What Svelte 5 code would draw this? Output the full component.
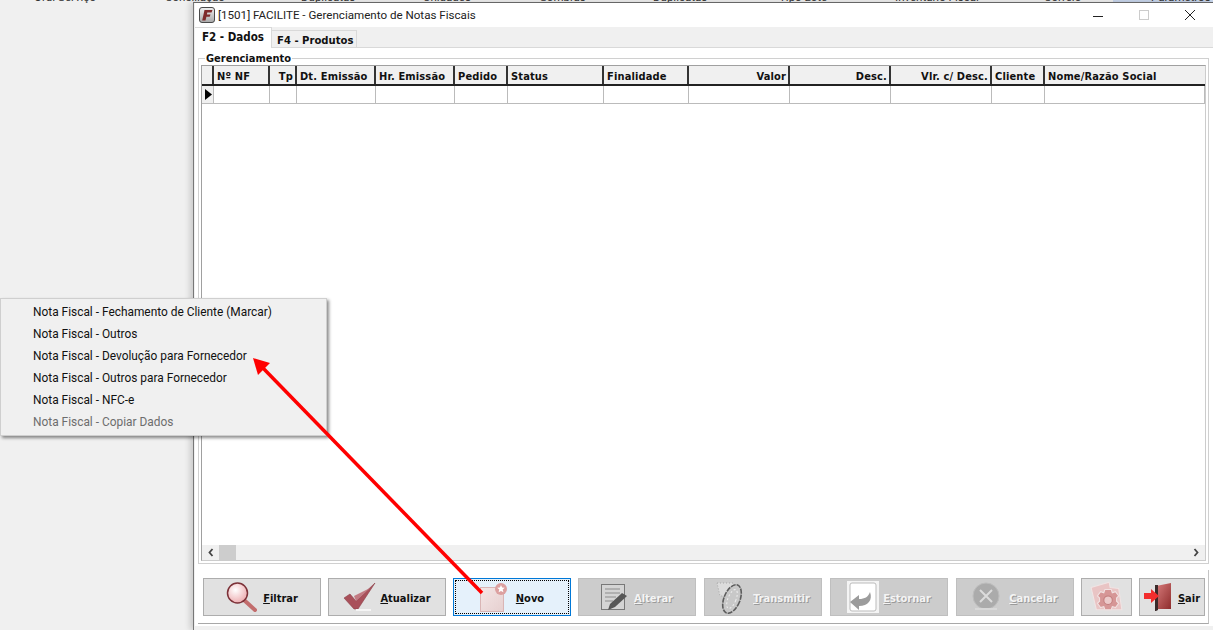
<script>
  const columns = [
    { label: "Nº NF", width: 56 },
    { label: "Tp", width: 27, right: true },
    { label: "Dt. Emissão", width: 79 },
    { label: "Hr. Emissão", width: 79 },
    { label: "Pedido", width: 53 },
    { label: "Status", width: 96 },
    { label: "Finalidade", width: 85 },
    { label: "Valor", width: 101, right: true },
    { label: "Desc.", width: 101, right: true },
    { label: "Vlr. c/ Desc.", width: 101, right: true },
    { label: "Cliente", width: 53 },
    { label: "Nome/Razão Social", width: 160 },
  ];

  // barra de menus que fica atras da janela, so aparece cortada
  const topMenu = [
    { label: "Ord. Serviço", x: 34 },
    { label: "Conciliação", x: 165 },
    { label: "Duplicatas", x: 301 },
    { label: "Unidades", x: 423 },
    { label: "Sombras", x: 540 },
    { label: "Duplicatas", x: 653 },
    { label: "Tipo Lote", x: 779 },
    { label: "Inventário Fiscal", x: 895 },
    { label: "Correio", x: 1044 },
    { label: "Parâmetros", x: 1151 },
  ];

  const menu = [
    "Nota Fiscal - Fechamento de Cliente (Marcar)",
    "Nota Fiscal - Outros",
    "Nota Fiscal - Devolução para Fornecedor",
    "Nota Fiscal - Outros para Fornecedor",
    "Nota Fiscal - NFC-e",
    "Nota Fiscal - Copiar Dados",
  ];
</script>

<div class="desktop">
  <div class="topstrip">
    <div class="active-item"></div>
    {#each topMenu as item}
      <span style="left:{item.x}px">{item.label}</span>
    {/each}
  </div>

  <div class="window">
    <div class="titlebar">
      <svg class="app-icon" width="16" height="16" viewBox="0 0 16 16">
        <defs>
          <linearGradient id="iconbg" x1="0" y1="0" x2="0" y2="1">
            <stop offset="0" stop-color="#f0f0f0" />
            <stop offset="1" stop-color="#a8a8a8" />
          </linearGradient>
        </defs>
        <rect x="0.5" y="0.5" width="15" height="15" rx="2.5" fill="url(#iconbg)" stroke="#4a4a4a" />
        <path d="M5.500 3h8l-1 2.500H8.300l-.4 2H11.500l-.8 2.300H7.400L6.500 13.500H3.200z" fill="#7f2a2a" />
      </svg>
      <span class="title">[1501] FACILITE - Gerenciamento de Notas Fiscais</span>
      <div class="winbtns">
        <svg width="46" height="24" viewBox="0 0 46 24"><path d="M18 13.500h10" stroke="#222" /></svg>
        <svg width="46" height="24" viewBox="0 0 46 24"><rect x="18.500" y="7.500" width="9" height="9" fill="none" stroke="#ccc" /></svg>
        <svg width="46" height="24" viewBox="0 0 46 24"><path d="M18 7l10 10M28 7L18 17" stroke="#222" fill="none" /></svg>
      </div>
    </div>

    <div class="body">
      <div class="tabs">
        <div class="tab active">F2 - Dados</div>
        <div class="tab">F4 - Produtos</div>
      </div>

      <div class="page">
        <fieldset class="group">
          <legend>Gerenciamento</legend>
          <div class="grid">
            <div class="gridrow head">
              <div class="indicator"></div>
              {#each columns as col}
                <div class="cell" class:right={col.right} style="width:{col.width}px">{col.label}</div>
              {/each}
            </div>
            <div class="gridrow data">
              <div class="indicator">
                <svg width="7" height="11" viewBox="0 0 7 11"><path d="M0 0l7 5.500L0 11z" fill="#000" /></svg>
              </div>
              {#each columns as col}
                <div class="cell" style="width:{col.width}px"></div>
              {/each}
            </div>
            <div class="grow"></div>
            <div class="hscroll">
              <svg class="arrow" width="17" height="15" viewBox="0 0 17 15"><path d="M10.500 4l-3 3.500 3 3.500" fill="none" stroke="#444" stroke-width="1.800" /></svg>
              <div class="thumb"></div>
              <div class="track"></div>
              <svg class="arrow" width="17" height="15" viewBox="0 0 17 15"><path d="M6.500 4l3 3.500-3 3.500" fill="none" stroke="#444" stroke-width="1.800" /></svg>
            </div>
          </div>
        </fieldset>

        <div class="actions">
          <button class="btn wide g6">
            <svg width="31" height="30" viewBox="0 0 31 30">
              <defs>
                <radialGradient id="lens" cx="0.4" cy="0.35" r="0.7">
                  <stop offset="0" stop-color="#fff" />
                  <stop offset="1" stop-color="#eca9ad" />
                </radialGradient>
              </defs>
              <path d="M18 18l11 10" stroke="#c26d6d" stroke-width="4" stroke-linecap="round" />
              <circle cx="11.500" cy="11" r="10" fill="url(#lens)" stroke="#7c3138" stroke-width="1.500" />
            </svg>
            <span><u>F</u>iltrar</span>
          </button>
          <button class="btn wide g3">
            <svg width="34" height="30" viewBox="0 0 34 30">
              <path d="M1 16l6-4 6 7L32 1 15 27h-4z" fill="#a9505a" stroke="#8c3f48" stroke-width="0.600" />
              <path d="M11 14l2 5L27 6z" fill="#c27a82" />
              <path d="M13 28h15" stroke="#f5f5f5" stroke-width="2" />
            </svg>
            <span><u>A</u>tualizar</span>
          </button>
          <button class="btn wide focused g8">
            <svg width="28" height="29" viewBox="0 0 28 29">
              <defs>
                <linearGradient id="sheet" x1="0" y1="0" x2="1" y2="1">
                  <stop offset="0" stop-color="#f4e6e6" />
                  <stop offset="1" stop-color="#e6cfcf" />
                </linearGradient>
              </defs>
              <rect x="0.500" y="4.500" width="23" height="24" fill="url(#sheet)" stroke="#d9b5b5" />
              <circle cx="21" cy="6" r="6" fill="#dca0a0" />
              <path d="M21 2l1.100 2.600 2.700.2-2.100 1.800.7 2.700-2.400-1.400-2.400 1.400.7-2.700-2.100-1.800 2.700-.2z" fill="#fff" />
            </svg>
            <span><u>N</u>ovo</span>
          </button>
          <button class="btn wide disabled g6">
            <svg width="27" height="30" viewBox="0 0 27 30">
              <rect x="0.500" y="2.500" width="23" height="25" fill="#d4d4d4" stroke="#787878" />
              <path d="M4 7h15M4 11h15M4 15h11M4 19h8" stroke="#a4a4a4" stroke-width="1.500" />
              <path d="M7 28l2-6L21 11l5 3-12 11z" fill="#565656" />
            </svg>
            <span><u>A</u>lterar</span>
          </button>
          <button class="btn wide disabled spaced g6">
            <svg width="31" height="33" viewBox="0 0 31 33">
              <path d="M1 2h16v7l-7 6H4z" fill="#dcdcdc" stroke="#a8a8a8" stroke-dasharray="1 2" />
              <ellipse cx="16" cy="18" rx="8" ry="15" transform="rotate(22 16 18)" fill="#c8c8c8" stroke="#5c5c5c" stroke-width="1.600" stroke-dasharray="5 1" />
              <ellipse cx="16" cy="18" rx="4" ry="10" transform="rotate(22 16 18)" fill="none" stroke="#eee" stroke-dasharray="2 2" />
            </svg>
            <span><u>T</u>ransmitir</span>
          </button>
          <button class="btn wide disabled spaced g4">
            <svg width="32" height="32" viewBox="0 0 32 32">
              <rect width="32" height="32" fill="#f4f4f4" />
              <rect x="3" y="2" width="26" height="28" rx="2" fill="#fff" stroke="#bbb" />
              <path d="M3 21l9-7v4c6 0 9-2 11-7 3 8-2 14-11 14v4z" fill="#9c9c9c" />
            </svg>
            <span><u>E</u>stornar</span>
          </button>
          <button class="btn wide disabled spaced g9">
            <svg width="28" height="30" viewBox="0 0 28 30">
              <circle cx="14" cy="14" r="13" fill="#ababab" stroke="#bdbdbd" />
              <path d="M8 8l12 12M20 8L8 20" stroke="#dcdcdc" stroke-width="2" />
              <path d="M3 27h22" stroke="#d8d8d8" stroke-width="2" />
            </svg>
            <span><u>C</u>ancelar</span>
          </button>
          <button class="btn small">
            <svg width="34" height="32" viewBox="0 0 32 30">
              <path d="M1 6l17-5 1 5 8 1 3 20H6z" fill="#e9c4c4" stroke="#f0e4e4" />
              <path d="M14 8h6l1 3 3-1 3 4-2 2v3l2 2-3 4-3-1-1 3h-6l-1-3-3 1-3-4 2-2v-3l-2-2 3-4 3 1z" fill="#d69696" stroke="#f1e2e2" />
              <circle cx="17" cy="18" r="4" fill="#eccaca" stroke="#c27c7c" />
            </svg>
          </button>
          <button class="btn exit g7">
            <svg width="27" height="28" viewBox="0 0 27 28">
              <defs>
                <linearGradient id="door" x1="0" y1="0" x2="1" y2="1">
                  <stop offset="0" stop-color="#d87c7c" />
                  <stop offset="1" stop-color="#8e2c2c" />
                </linearGradient>
              </defs>
              <path d="M12 3l15-3v26H12z" fill="url(#door)" />
              <path d="M11 2h3v25l-2 1h-1z" fill="#3a2a2a" />
              <path d="M0 10h7V6l8 7-8 7v-4H0z" fill="#f22d2d" />
            </svg>
            <span><u>S</u>air</span>
          </button>
        </div>
      </div>
    </div>
  </div>

  <ul class="menu">
    {#each menu as item, i}
      <li class:off={i === 5}>{item}</li>
    {/each}
  </ul>

  <svg class="pointer" width="1213" height="630" viewBox="0 0 1213 630">
    <path d="M482 593L262 367" stroke="#ff0000" stroke-width="3.500" fill="none" />
    <path d="M253 358l17 5-12 12z" fill="#ff0000" />
  </svg>
</div>

<style>
  :global(body) {
    margin: 0;
    background: #f0f0f0;
    font-family: Roboto, sans-serif;
  }
  .desktop {
    position: relative;
    width: 1213px;
    height: 630px;
    overflow: hidden;
    background: #f0f0f0;
  }
  .topstrip span {
    position: absolute;
    top: -10px;
    font: 11.5px Roboto, sans-serif;
    color: #333;
    white-space: nowrap;
  }
  .active-item {
    position: absolute;
    left: 1113px;
    top: 0;
    width: 100px;
    height: 3px;
    background: #c9d6ec;
  }
  .window {
    position: absolute;
    left: 193px;
    top: 2px;
    width: 1020px;
    height: 628px;
    box-sizing: border-box;
    background: #f0f0f0;
    border-top: 1px solid #666;
    border-left: 1px solid #777;
    box-shadow: -3px 0 6px rgba(0, 0, 0, 0.16);
    display: flex;
    flex-direction: column;
  }
  .titlebar {
    height: 24px;
    flex: none;
    background: #fff;
    display: flex;
    align-items: center;
    padding-left: 4px;
    margin-left: 1px;
  }
  .app-icon {
    margin-top: -1px;
  }
  .title {
    margin-left: 3px;
    font: 11.6px Roboto, sans-serif;
    color: #222;
    margin-top: -1px;
  }
  .winbtns {
    margin-left: auto;
    display: flex;
  }
  .body {
    flex: 1;
    display: flex;
    flex-direction: column;
    padding-left: 1px;
    min-height: 0;
  }
  .tabs {
    height: 20px;
    display: flex;
    align-items: flex-end;
    flex: none;
  }
  .tab {
    height: 17px;
    box-sizing: border-box;
    width: 85px;
    padding-left: 5px;
    font: bold 11.2px/19px "DejaVu Sans Condensed", "DejaVu Sans", sans-serif;
    border: 1px solid #d9d9d9;
    border-bottom: none;
    border-left: none;
    color: #111;
    white-space: nowrap;
  }
  .tab.active {
    height: 21px;
    width: 77px;
    font-size: 11.5px;
    line-height: 19px;
    padding-left: 7px;
    background: #fff;
    margin-bottom: -1px;
    position: relative;
  }
  .page {
    flex: 1;
    background: #fff;
    border-top: 1px solid #d9d9d9;
    display: flex;
    flex-direction: column;
    min-height: 0;
    padding: 4px 4px 0 3px;
    margin-bottom: 4px;
  }
  .group {
    flex: 1;
    margin: 0;
    padding: 0 2px 2px 2px;
    border: 1px solid #d0d0d0;
    min-height: 0;
    min-width: 0;
    display: flex;
    flex-direction: column;
  }
  legend {
    padding: 0 1px;
    margin-left: 4px;
    font: bold 11px/13px "DejaVu Sans Condensed", "DejaVu Sans", sans-serif;
    color: #111;
  }
  .grid {
    flex: 1;
    display: flex;
    flex-direction: column;
    border: 1px solid #a0a0a0;
    border-right: 1px solid #ccc;
    border-bottom: 1px solid #ccc;
    min-height: 0;
  }
  .gridrow {
    display: flex;
    flex: none;
  }
  .gridrow.head {
    height: 18px;
    background: #f0f0f0;
    border-bottom: 2px solid #222;
  }
  .gridrow.data {
    height: 17px;
    border-bottom: 1px solid #bbb;
  }
  .indicator {
    width: 12px;
    flex: none;
    background: #f0f0f0;
    border-right: 2px solid #333;
    display: flex;
    align-items: center;
    padding-left: 3px;
    box-sizing: border-box;
  }
  .data .indicator {
    border-right: 1px solid #bbb;
  }
  .cell {
    flex: none;
    box-sizing: border-box;
    border-right: 1px solid #bbb;
    padding: 1px 2px 0 3px;
    font: bold 11px/19px "DejaVu Sans Condensed", "DejaVu Sans", sans-serif;
    letter-spacing: 0.15px;
    white-space: nowrap;
    color: #111;
  }
  .head .cell {
    border-right: 2px solid #333;
  }
  .head .cell:last-child {
    border-right: none;
  }
  .cell.right {
    text-align: right;
  }
  .grow {
    flex: 1;
    background: #fff;
  }
  .hscroll {
    height: 15px;
    flex: none;
    display: flex;
    align-items: center;
    background: #f0f0f0;
  }
  .thumb {
    width: 17px;
    height: 15px;
    background: #cdcdcd;
  }
  .track {
    flex: 1;
  }
  .actions {
    flex: none;
    height: 54px;
    margin: 6px 0 2px;
    display: flex;
    align-items: flex-start;
    gap: 7px;
    padding: 8px 0 0 5px;
    box-sizing: border-box;
    border-bottom: 1px solid #a8a8a8;
    border-right: 1px solid #c4c4c4;
  }
  .btn {
    height: 38px;
    flex: none;
    box-sizing: border-box;
    background: #e1e1e1;
    border: 1px solid #adadad;
    padding: 0;
    display: flex;
    align-items: center;
    justify-content: center;
    font: bold 11px "DejaVu Sans Condensed", "DejaVu Sans", sans-serif;
    color: #111;
  }
  .btn span {
    margin-top: 2px;
  }
  .wide {
    width: 118px;
  }
  .spaced {
    margin-left: 1px;
  }
  .small {
    width: 51px;
  }
  .exit {
    width: 66px;
  }
  .g3 {
    gap: 3px;
  }
  .g4 {
    gap: 4px;
  }
  .g6 {
    gap: 6px;
  }
  .g7 {
    gap: 7px;
  }
  .g8 {
    gap: 8px;
  }
  .g9 {
    gap: 9px;
  }
  .focused {
    background: #e5f1fb;
    border-color: #0078d7;
    outline: 1px dotted #000;
    outline-offset: -3px;
  }
  .disabled {
    background: #cccccc;
    border-color: #bfbfbf;
    color: #f4f4f4;
    text-shadow: 1px 1px 0 #9a9a9a;
  }
  .menu {
    position: absolute;
    left: 0;
    top: 298px;
    width: 327px;
    height: 138px;
    margin: 0;
    padding: 2px 0;
    box-sizing: border-box;
    list-style: none;
    background: #f0f0f0;
    border: 1px solid #cfcfcf;
    box-shadow: 2px 2px 3px rgba(0, 0, 0, 0.45);
  }
  .menu li {
    height: 22px;
    padding-left: 32px;
    font: 11.9px/22px Roboto, sans-serif;
    color: #111;
    white-space: nowrap;
  }
  .menu li.off {
    color: #6d6d6d;
  }
  .pointer {
    position: absolute;
    left: 0;
    top: 0;
    pointer-events: none;
  }
</style>
